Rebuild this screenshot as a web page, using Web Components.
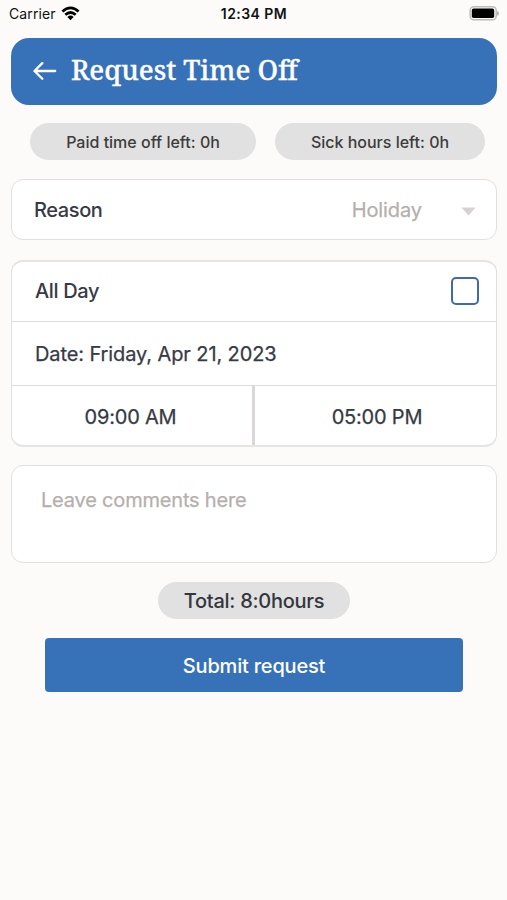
<!DOCTYPE html>
<html lang="en">
<head>
<meta charset="utf-8">
<title>Request Time Off</title>
<style>
  html, body { margin: 0; }
  body { background: #fcfbf9; font-family: Inter, "Liberation Sans", sans-serif; color: #373a45; }
</style>
</head>
<body>
<time-off-screen></time-off-screen>
<script>
function define(name, html) {
  const template = document.createElement('template');
  template.innerHTML = html;
  customElements.define(name, class extends HTMLElement {
    constructor() {
      super();
      this.attachShadow({ mode: 'open' }).append(template.content.cloneNode(true));
    }
  });
}

define('status-bar', `
<style>
  :host { display: grid; grid-template-columns: 1fr auto 1fr; align-items: center; height: 28px; padding: 0 8px 0 9px; box-sizing: border-box; color: #111; font-size: 14px; line-height: 28px; }
  .left { display: flex; align-items: center; gap: 5px; letter-spacing: .1px; }
  .time { font-weight: 600; letter-spacing: .45px; }
  .battery { justify-self: end; margin-top: -2px; }
  .wifi { margin-top: -2px; }
  svg { display: block; }
</style>
<div class="left"><slot name="carrier"></slot>
  <svg class="wifi" width="19" height="15" viewBox="0 0 19 15" fill="none" stroke="#000" stroke-width="2.7"><path d="M1.4 5.5Q9.5 -1.8 17.6 5.5M4.3 8.8Q9.5 4.2 14.7 8.8"/><path d="M6.4 11Q9.5 8.2 12.6 11L9.5 14.2Z" fill="#000" stroke="none"/></svg>
</div>
<div class="time"><slot></slot></div>
<svg class="battery" width="30" height="15" viewBox="0 0 30 15"><rect x="1.2" y=".8" width="26" height="13" rx="3.6" fill="#fcfbf9" stroke="#bdbcba" stroke-width="1.5"/><rect x="2.8" y="2.6" width="22.4" height="9.4" rx="1.8" fill="#000"/><path d="M28 5v4.8q2-.7 2-2.4T28 5Z" fill="#b5b4b2"/></svg>
`);

define('page-header', `
<style>
  :host { display: flex; align-items: center; height: 67px; box-sizing: border-box; padding-left: 22px; border-radius: 18px; background: #3772b9; color: #fff; }
  svg { display: block; margin-right: 14px; margin-top: -1px; }
  h1 { margin: -3px 0 0; font: 500 27.3px/36px "Source Serif Pro", "Noto Serif", "Liberation Serif", serif; font-variant-ligatures: common-ligatures; -webkit-text-stroke: .3px #fff; }
</style>
<svg width="24" height="20" viewBox="0 0 24 20" fill="none" stroke="#fff" stroke-width="2.3" stroke-linecap="round" stroke-linejoin="round"><path d="M22.2 10H1.8M9.3 2.1 1.5 10l7.8 7.8"/></svg>
<h1><slot></slot></h1>
`);

define('info-pill', `
<style>
  :host { display: flex; align-items: center; justify-content: center; height: 37px; border-radius: 19px; background: #e1e1e1; color: #3c3c3c; font-size: 16px; font-weight: 500; white-space: nowrap; }
</style><slot></slot>
`);

define('form-card', `
<style>
  :host { display: block; box-sizing: border-box; border: 1px solid #e2e0df; border-radius: 12px; background: #fff; overflow: hidden; }
</style><slot></slot>
`);

define('select-row', `
<style>
  :host { display: flex; align-items: center; height: 59px; padding: 0 20px 0 22px; font-size: 20px; }
  .label { flex: 1; font-weight: 500; letter-spacing: -.4px; }
  .value { color: #b5afad; margin-right: 39px; letter-spacing: -.1px; -webkit-text-stroke: .25px; }
  svg { display: block; margin-top: 3px; }
</style>
<span class="label"><slot></slot></span><span class="value"><slot name="value"></slot></span>
<svg width="15" height="9" viewBox="0 0 15 9"><path d="M.5 .5h14L7.5 8.4Z" fill="#d5d2d1"/></svg>
`);

define('check-row', `
<style>
  :host { display: flex; align-items: center; justify-content: space-between; height: 60px; box-sizing: border-box; padding: 0 17px 2px 23px; font-size: 20px; font-weight: 500; letter-spacing: -.35px; border-bottom: 1px solid #dedcdb; }
  .box { width: 28px; height: 28px; box-sizing: border-box; border: 2px solid #4069b0; border-radius: 5px; background: #fff; }
</style>
<span><slot></slot></span><span class="box" role="checkbox" aria-checked="false"></span>
`);

define('date-row', `
<style>
  :host { display: flex; align-items: center; height: 64px; box-sizing: border-box; padding: 1px 23px 0; font-size: 20px; letter-spacing: -.1px; -webkit-text-stroke: .25px; border-bottom: 1px solid #dedcdb; }
</style><slot></slot>
`);

define('time-range', `
<style>
  :host { display: grid; grid-template-columns: 240px 3px 1fr; height: 59px; font-size: 20px; letter-spacing: -.2px; -webkit-text-stroke: .25px; line-height: 62px; text-align: center; }
  i { background: #d9d7d7; }
  .from { padding-right: 3px; }
  .to { padding-left: 3px; }
</style>
<span class="from"><slot name="from"></slot></span><i></i><span class="to"><slot name="to"></slot></span>
`);

define('comment-box', `
<style>
  :host { display: block; height: 96px; box-sizing: border-box; padding: 20px 29px; font-size: 20px; letter-spacing: -.19px; -webkit-text-stroke: .25px; line-height: 28px; color: #b5afad; }
</style><slot></slot>
`);

define('submit-button', `
<style>
  :host { display: block; }
  button { display: block; width: 100%; height: 54px; margin: 0; padding: 1px 0 0; border: 0; border-radius: 4px; background: #3772b9; color: #fff; font: 500 20px Inter, "Liberation Sans", sans-serif; letter-spacing: -.2px; }
</style><button type="button"><slot></slot></button>
`);

define('time-off-screen', `
<style>
  :host { display: flex; flex-direction: column; height: 900px; }
  main { display: flex; flex-direction: column; padding: 10px 10px 0 11px; }
  .pills { display: grid; grid-template-columns: 226px 210px; gap: 19px; margin: 18px 0 19px 19px; }
  .schedule { margin: 20px 0 18px; border-top: 2px solid #e6e4e3; border-bottom: 2px solid #e6e4e3; }
  .total { align-self: center; width: 192px; margin: 19px 0; color: #34363d; font-size: 20px; letter-spacing: -.28px; }
  submit-button { margin: 0 34px; }
</style>
<status-bar><span slot="carrier">Carrier</span>12:34 PM</status-bar>
<main>
  <page-header>Request Time Off</page-header>
  <div class="pills"><info-pill>Paid time off left: 0h</info-pill><info-pill>Sick hours left: 0h</info-pill></div>
  <form-card><select-row>Reason<span slot="value">Holiday</span></select-row></form-card>
  <form-card class="schedule">
    <check-row>All Day</check-row>
    <date-row>Date: Friday, Apr 21, 2023</date-row>
    <time-range><span slot="from">09:00 AM</span><span slot="to">05:00 PM</span></time-range>
  </form-card>
  <form-card><comment-box>Leave comments here</comment-box></form-card>
  <info-pill class="total">Total: 8:0hours</info-pill>
  <submit-button>Submit request</submit-button>
</main>
`);
</script>
</body>
</html>
